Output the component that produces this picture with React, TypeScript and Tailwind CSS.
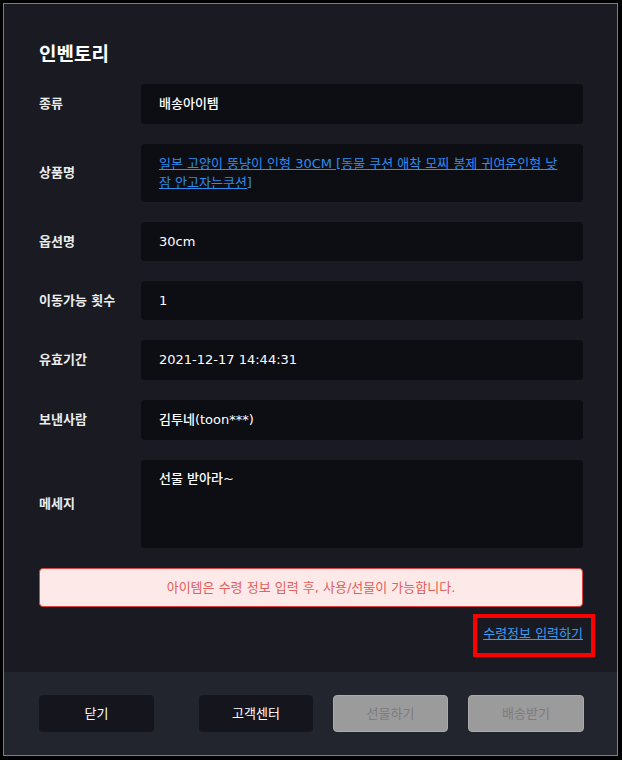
import React from "react";

const font = { fontFamily: '"DejaVu Sans", "Noto Sans CJK KR", sans-serif' };

function Row({ label, children, h = "h-[40px]", top = false }: { label: string; children: React.ReactNode; h?: string; top?: boolean }) {
  return (
    <div className="flex items-center">
      <div className="w-[102px] shrink-0 text-[13px] font-bold text-[#ececec]">{label}</div>
      <div className={`flex-1 ${h} rounded-[4px] bg-[#0d0e13] px-[18px] flex ${top ? "items-start pt-[9px]" : "items-center"} text-[13px] font-medium text-white`}>
        {children}
      </div>
    </div>
  );
}

export default function App() {
  return (
    <div className="w-[622px] h-[760px] bg-black pt-[3px] pl-[3px]" style={font}>
      <div className="w-[615px] h-[753px] border border-[#1f9bd7] bg-[#1a1b22] flex flex-col">
        <div className="flex-1 px-[35px] pr-[34px] pt-[36px]">
          <div className="text-[19px] leading-[28px] font-bold text-white">인벤토리</div>
          <div className="mt-[16px] flex flex-col gap-[20px]">
            <Row label="종류">배송아이템</Row>
            <Row label="상품명" h="h-[58px]">
              <a href="#" className="text-[#2d8cf0] underline leading-[19px] font-normal">
                <span className="whitespace-nowrap">일본 고양이 뚱냥이 인형 30CM [동물 쿠션 애착 모찌 봉제 귀여운인형 낮</span>
                <br />
                <span className="whitespace-nowrap">잠 안고자는쿠션]</span>
              </a>
            </Row>
            <Row label="옵션명" h="h-[39px]">30cm</Row>
            <Row label="이동가능 횟수" h="h-[39px]">1</Row>
            <Row label="유효기간">2021-12-17 14:44:31</Row>
            <Row label="보낸사람">김투네(toon***)</Row>
            <Row label="메세지" h="h-[88px]" top>선물 받아라~</Row>
          </div>
          <div className="mt-[20px] h-[39px] rounded-[4px] border border-[#d9443f] bg-[#fde9e8] flex items-center justify-center text-[13px] text-[#e0605c]">
            아이템은 수령 정보 입력 후, 사용/선물이 가능합니다.
          </div>
          <div className="mt-[17px] flex justify-end">
            <div className="relative">
              <a href="#" className="block text-[13px] leading-[20px] text-[#3b9cf6] underline">수령정보 입력하기</a>
              <span className="absolute -left-[10px] -right-[12px] -top-[10px] -bottom-[13px] border-4 border-[#ff0000]" />
            </div>
          </div>
        </div>
        <div className="h-[83px] bg-[#22242e] px-[35px] pr-[33px] pt-[23px] flex items-start">
          <button className="w-[115px] h-[37px] rounded-[4px] bg-[#15161d] text-[13px] text-white">닫기</button>
          <div className="ml-auto flex gap-[20px]">
            <button className="w-[114px] h-[37px] rounded-[4px] bg-[#15161d] text-[13px] text-white">고객센터</button>
            <button className="w-[115px] h-[37px] rounded-[4px] bg-[#9b9b9b] border border-[#ababab] text-[13px] text-[#7c7c7c]">선물하기</button>
            <button className="w-[116px] h-[37px] rounded-[4px] bg-[#9b9b9b] border border-[#ababab] text-[13px] text-[#7c7c7c]">배송받기</button>
          </div>
        </div>
      </div>
    </div>
  );
}
